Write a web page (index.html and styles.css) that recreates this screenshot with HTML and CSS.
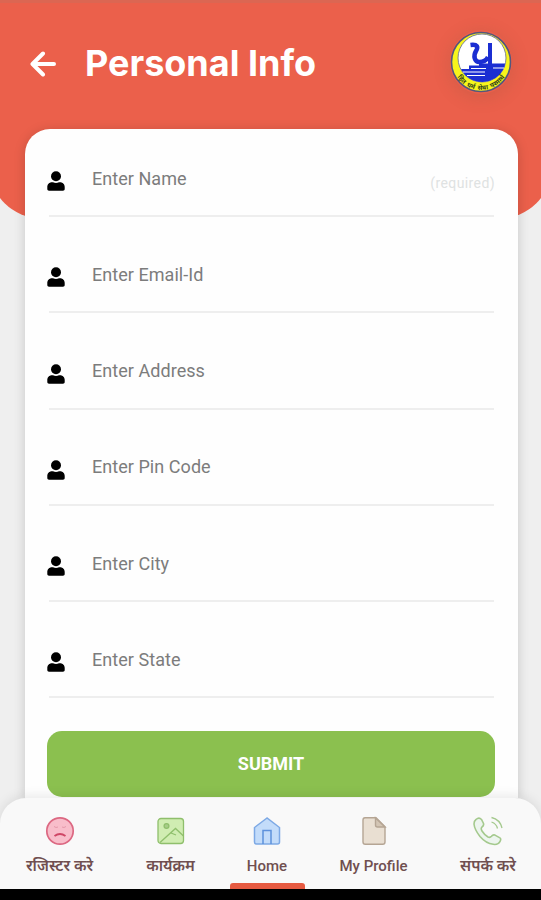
FILE: index.html
```html
<!DOCTYPE html>
<html lang="en">
<head>
<meta charset="utf-8">
<title>Personal Info</title>
<link rel="stylesheet" href="styles.css">
</head>
<body>
<svg class="defs" width="0" height="0">
  <symbol id="user" viewBox="0 0 18 20">
    <circle cx="9" cy="5.200" r="5"/>
    <path d="M5 11.300h1c2 .9 4 .9 6 0h1c2.900 0 4.700 2.200 4.700 4.700v2c0 1-.7 1.700-1.700 1.700H2c-1 0-1.700-.7-1.700-1.700v-2c0-2.500 1.800-4.700 4.700-4.700z"/>
  </symbol>
</svg>
<div class="screen">
  <header class="header">
    <svg class="back" viewBox="0 0 26 26"><path d="M24 13H3M13 2.500 2.500 13 13 23.500"/></svg>
    <h1 class="title">Personal Info</h1>
    <svg class="logo" viewBox="0 0 62 64">
      <circle cx="31" cy="32" r="29.500" fill="#f7f51b" stroke="#54577c" stroke-width="1.600"/>
      <circle cx="32" cy="28" r="24" fill="#fff" stroke="#7c8494" stroke-width="1"/>
      <path d="M11 39h8v-3.500h10v-2H55q0 3-1.500 5.500-6 12-21 13-15-.5-21.500-13z" fill="#1b2ed2"/>
      <path d="M20.500 15c7-1 8 2 5.500 6-3 5-1.500 11 3.500 11 5 0 7-2 8.500-5" fill="none" stroke="#1b2ed2" stroke-width="4.500"/>
      <path d="M40 13v26" fill="none" stroke="#1b2ed2" stroke-width="4"/>
      <path d="M13 42h22M17 45.500h18M21 38.500h15M43 38h11" stroke="#fff" stroke-width="1.200"/>
      <path id="ring" d="M4.500 42Q13 59.500 31 60Q49 59.500 57.500 42" fill="none"/>
      <text class="logo-text"><textPath href="#ring" startOffset="50%">हित धर्म सेवा परमार्थ</textPath></text>
    </svg>
  </header>
  <main class="card">
    <div class="fields">
      <label class="field"><svg class="user"><use href="#user"/></svg><span class="placeholder">Enter Name</span><span class="required">(required)</span></label>
      <label class="field"><svg class="user"><use href="#user"/></svg><span class="placeholder">Enter Email-Id</span></label>
      <label class="field"><svg class="user"><use href="#user"/></svg><span class="placeholder">Enter Address</span></label>
      <label class="field"><svg class="user"><use href="#user"/></svg><span class="placeholder">Enter Pin Code</span></label>
      <label class="field"><svg class="user"><use href="#user"/></svg><span class="placeholder">Enter City</span></label>
      <label class="field"><svg class="user"><use href="#user"/></svg><span class="placeholder">Enter State</span></label>
    </div>
    <button class="submit">SUBMIT</button>
  </main>
  <nav class="nav">
    <a class="tab hindi">
      <svg viewBox="0 0 30 30" fill="none"><circle cx="15" cy="15" r="13.200" fill="#f8bdca" stroke="#dc6882" stroke-width="1.700"/><path d="M9.500 20q5.500-4 11 0" stroke="#cf4665" stroke-width="1.800"/><path d="M9 10.500l2 1 2-.5M17 11l2 .5 2-1" stroke="#e59aab"/></svg>
      <span>रजिस्टर करे</span>
    </a>
    <a class="tab hindi">
      <svg viewBox="0 0 30 30" fill="none" stroke="#8fbf6c" stroke-width="1.300"><rect x="2" y="2.500" width="25.500" height="25" rx="3" fill="#d0edb2"/><circle cx="10.500" cy="10" r="2.400" fill="#a7cd89"/><path d="M4 26.500 19.500 12.500l8 7.500M15 17l5 2"/></svg>
      <span>कार्यक्रम</span>
    </a>
    <a class="tab active">
      <svg viewBox="0 0 30 30" fill="none" stroke="#7da9e5" stroke-width="1.500"><path d="M15 2 2.500 11.500V26q0 2 2 2h21q2 0 2-2V11.500z" fill="#c3dcfa"/><path d="M11 28V14.500h8V28" stroke="#5e91dc"/></svg>
      <span>Home</span>
    </a>
    <a class="tab">
      <svg viewBox="0 0 30 30" fill="none" stroke="#b5a594" stroke-width="1.400"><path d="M6 1.700h11l9 9V26q0 2.300-2.300 2.300H6.300Q4 28.300 4 26V4q0-2.300 2-2.300z" fill="#e9dfd2"/><path d="M16.500 2v7q0 2 2 2H26z" fill="#d3c5b4"/></svg>
      <span>My Profile</span>
    </a>
    <a class="tab hindi">
      <svg viewBox="0 0 30 30" fill="none" stroke="#a4c98d" stroke-width="1.600"><path d="M3 3.500Q6 .8 8.500 3.500l2 4q.6 2-1.500 3.500-1.500 1.500 0 4 2.500 4 6 6 2 1 3.500-.7 1.500-2 3.500-1.200l4.500 2.500q2 1 .7 3.500-2 4-7 3.200Q13 27.500 7 20.500 1.500 13.500 1 8q0-3 2-4.500z" fill="#edf5ef"/><path d="M18.500 1.500q8.500 2 10.500 10.500M18.500 6q5 1.700 6 6.500" stroke-width="1.300"/></svg>
      <span>संपर्क करे</span>
    </a>
  </nav>
  <div class="system-bar"></div>
</div>
</body>
</html>
```
FILE: styles.css
```css
* { box-sizing: border-box; }
body {
  margin: 0;
  background: #efefef;
  font-family: Roboto, "Noto Sans", sans-serif;
}
.defs { display: block; }
.screen {
  display: flex;
  flex-direction: column;
  width: 541px;
  height: 900px;
  overflow: hidden;
}
.header {
  display: flex;
  align-items: flex-start;
  flex: none;
  height: 218px;
  margin: 0 -10px;
  padding: 0 39px 0 40px;
  border-top: 3px solid #dc6652;
  border-radius: 0 0 50px 50px;
  background: #eb604b;
}
.back {
  width: 26px;
  height: 26px;
  margin-top: 48px;
  fill: none;
  stroke: #fff;
  stroke-width: 4;
  stroke-linecap: round;
  stroke-linejoin: round;
}
.title {
  flex: 1;
  margin: 37px 0 0 29px;
  color: #fff;
  font: 650 36px/46px Inter, sans-serif;
  letter-spacing: 0;
  white-space: nowrap;
}
.logo {
  width: 62px;
  height: 64px;
  margin-top: 27px;
  border-radius: 50%;
  box-shadow: 0 3px 18px rgba(90, 70, 50, .17);
}
.logo-text {
  fill: #33451b;
  font: 700 6.500px "Noto Sans", sans-serif;
  text-anchor: middle;
  word-spacing: 1.500px;
}
.card {
  display: flex;
  flex-direction: column;
  flex: none;
  position: relative;
  height: 669px;
  margin: -89px 23px 0 25px;
  padding: 0 23px;
  border-radius: 25px 25px 0 0;
  background: #fefefe;
  box-shadow: 0 2px 12px rgba(0, 0, 0, .17);
}
.fields {
  display: grid;
  grid-template-rows: 88px repeat(5, 96.300px);
  flex: none;
}
.field {
  display: flex;
  align-items: flex-end;
  margin-left: 1px;
  margin-right: 1px;
  border-bottom: 2px solid #eee;
}
.user {
  width: 18px;
  height: 20px;
  margin: 0 0 24px -2px;
  fill: #000;
}
.placeholder {
  flex: 1;
  margin: 0 0 24.500px 27px;
  color: #7c7c7c;
  font-size: 18px;
  line-height: 24px;
  letter-spacing: .05px;
}
.required {
  margin: 0 -1px 22px 0;
  color: #dfe2e2;
  font-size: 14px;
  line-height: 20px;
  letter-spacing: .4px;
}
.submit {
  flex: none;
  height: 66px;
  margin: 32.500px 0 0 -1px;
  padding: 0;
  border: 0;
  border-radius: 15px;
  background: #8bc04f;
  color: #fff;
  font: 700 18px Roboto, sans-serif;
}
.nav {
  display: grid;
  grid-template-columns: 119px 103px 90px 123px 106px;
  flex: none;
  position: relative;
  height: 91px;
  border-radius: 26px 26px 0 0;
  background: #f9f9f9;
  box-shadow: 0 -2px 12px rgba(0, 0, 0, .09);
}
.tab {
  display: flex;
  flex-direction: column;
  align-items: center;
  position: relative;
  padding-top: 18px;
  color: #704f50;
  font-size: 15px;
  font-weight: 500;
  line-height: 20px;
  white-space: nowrap;
}
.hindi { font-weight: 600; }
.tab svg { width: 30px; height: 30px; margin-bottom: 10px; }
.tab.hindi span { font-size: 15.500px; }
.tab.active::after {
  content: "";
  position: absolute;
  bottom: 0;
  width: 75px;
  height: 6px;
  border-radius: 3px 3px 0 0;
  background: #e65a41;
}
.system-bar { flex: none; height: 11px; background: #000; }
```
